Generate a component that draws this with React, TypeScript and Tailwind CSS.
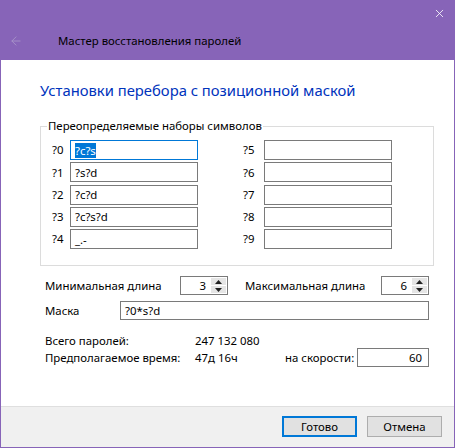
import { X, ArrowLeft } from "lucide-react";

const LEFT = ["?c?s", "?s?d", "?c?d", "?c?s?d", "_.-"];

function Spin({ value }: { value: string }) {
  return (
    <div className="flex h-[19px] w-[48px] border border-[#7a7a7a] bg-white">
      <div className="flex flex-1 items-center justify-end pr-[5px] leading-none">
        {value}
      </div>
      <div className="flex w-[16px] flex-col gap-[1px] py-[1px] pr-[1px]">
        <div className="flex flex-1 items-center justify-center bg-[#e5e5e5]">
          <svg width="7" height="4" viewBox="0 0 7 4">
            <path d="M0 4 L3.5 0 L7 4 Z" fill="#222" />
          </svg>
        </div>
        <div className="flex flex-1 items-center justify-center bg-[#e5e5e5]">
          <svg width="7" height="4" viewBox="0 0 7 4">
            <path d="M0 0 L3.5 4 L7 0 Z" fill="#222" />
          </svg>
        </div>
      </div>
    </div>
  );
}

function Field({ value, focused }: { value: string; focused?: boolean }) {
  return (
    <div
      className={
        focused
          ? "flex h-[20px] w-[128px] items-center border border-[#0078d7] bg-white pl-[4px]"
          : "flex h-[20px] w-[128px] items-center border border-[#7a7a7a] bg-white pl-[4px]"
      }
    >
      {focused ? (
        <span className="bg-[#0078d7] leading-[15px] text-white">{value}</span>
      ) : (
        <span className="leading-[15px]">{value}</span>
      )}
    </div>
  );
}

export default function App() {
  return (
    <div
      className="flex h-[448px] w-[455px] flex-col border-x border-b border-[#8764b8] bg-white text-[11.4px] text-black"
      style={{ fontFamily: '"Noto Sans", "Liberation Sans", sans-serif' }}
    >
      {/* title bar */}
      <div className="relative h-[60px] shrink-0 bg-[#8764b8]">
        <X
          className="absolute right-[8px] top-[7px] text-white"
          size={13}
          strokeWidth={1.5}
        />
        <div className="absolute left-[8px] top-[34px] flex items-center">
          <ArrowLeft size={14} strokeWidth={1.5} className="text-[#a893c9]" />
        </div>
        <div className="absolute left-[57px] top-[32px] leading-[18px]">
          Мастер восстановления паролей
        </div>
      </div>

      {/* content */}
      <div className="flex flex-1 flex-col whitespace-nowrap pl-[39px] pr-[20px] pt-[20px]">
        <h1 className="text-[14.8px] leading-[20px] text-[#0033bc]">
          Установки перебора с позиционной маской
        </h1>

        <fieldset className="mt-[18px] border border-[#dcdcdc] pb-[16px] pt-[6px]">
          <legend className="ml-[6px] px-[1px] leading-[16px]">
            Переопределяемые наборы символов
          </legend>
          <div className="flex pl-[11px]">
            <div className="flex flex-col gap-[2.25px]">
              {LEFT.map((v, i) => (
                <div key={i} className="flex items-center">
                  <span className="w-[18px]">?{i}</span>
                  <Field value={v} focused={i === 0} />
                </div>
              ))}
            </div>
            <div className="ml-[45px] flex flex-col gap-[2.25px]">
              {[5, 6, 7, 8, 9].map((n) => (
                <div key={n} className="flex items-center">
                  <span className="w-[21px]">?{n}</span>
                  <Field value="" />
                </div>
              ))}
            </div>
          </div>
        </fieldset>

        <div className="mt-[10px] flex items-center pl-[5px]">
          <span className="w-[135px]">Минимальная длина</span>
          <Spin value="3" />
          <span className="ml-[17px] w-[136px]">Максимальная длина</span>
          <Spin value="6" />
        </div>

        <div className="mt-[6px] flex items-center pl-[5px]">
          <span className="w-[75px]">Маска</span>
          <div className="flex h-[19px] w-[309px] items-center border border-[#7a7a7a] bg-white pl-[4px]">
            ?0*s?d
          </div>
        </div>

        <div className="mt-[13px] flex h-[15px] items-center pl-[5px]">
          <span className="w-[150px]">Всего паролей:</span>
          <span>247 132 080</span>
        </div>
        <div className="flex h-[19px] items-center pl-[5px]">
          <span className="w-[150px]">Предполагаемое время:</span>
          <span className="w-[90px]">47д 16ч</span>
          <span className="w-[72px]">на скорости:</span>
          <div className="flex h-[19px] w-[72px] items-center justify-end border border-[#7a7a7a] bg-white pr-[6px]">
            60
          </div>
        </div>
      </div>

      {/* footer */}
      <div className="flex h-[41px] shrink-0 justify-end gap-[10px] border-t border-[#dfdfdf] bg-[#f0f0f0] pr-[12px] pt-[9px]">
        <button className="h-[21px] w-[75px] border-2 border-[#0078d7] bg-[#e1e1e1] leading-none">
          Готово
        </button>
        <button className="h-[21px] w-[75px] border border-[#adadad] bg-[#e1e1e1] leading-none">
          Отмена
        </button>
      </div>
    </div>
  );
}
